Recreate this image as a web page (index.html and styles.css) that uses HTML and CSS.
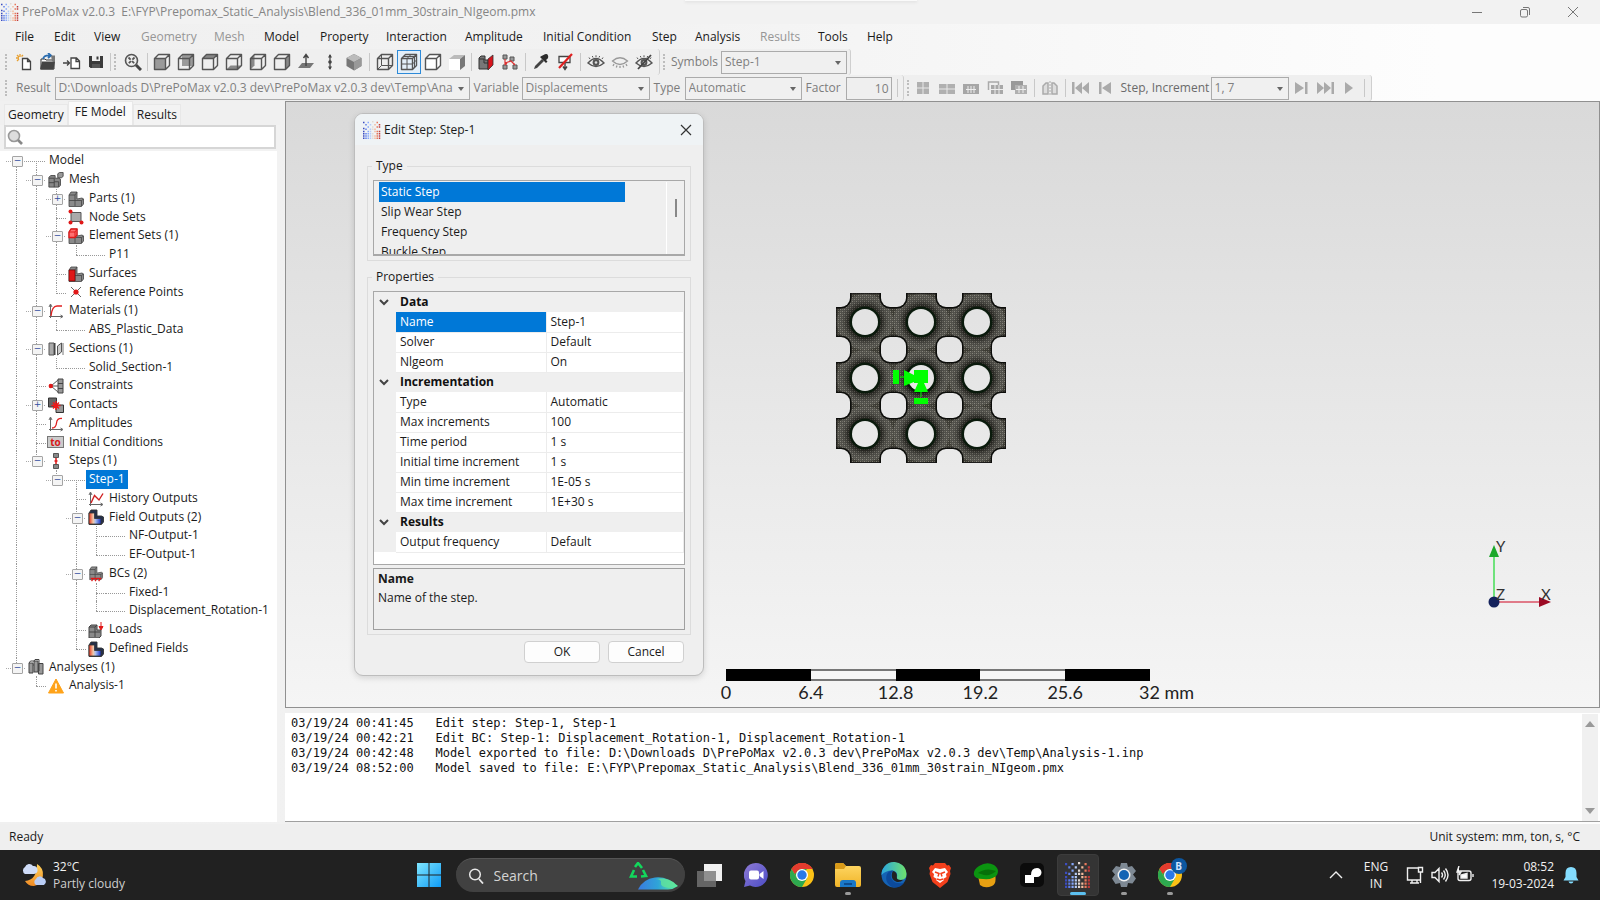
FILE: index.html
```html
<!DOCTYPE html>
<html lang="en">
<head>
<meta charset="utf-8">
<title>PrePoMax v2.0.3</title>
<link rel="stylesheet" href="styles.css">
</head>
<body>
<svg class="sprite" aria-hidden="true">
  <defs>
    <linearGradient id="gFolder" x1="0" y1="0" x2="0" y2="1"><stop offset="0" stop-color="#ffd968"/><stop offset="1" stop-color="#f0b428"/></linearGradient>
    <linearGradient id="gWin" x1="0" y1="0" x2="1" y2="1"><stop offset="0" stop-color="#7fe6ff"/><stop offset="1" stop-color="#0f9bf5"/></linearGradient>
    <linearGradient id="gChat" x1="0" y1="0" x2="1" y2="1"><stop offset="0" stop-color="#8f7bd6"/><stop offset="1" stop-color="#4b4cc4"/></linearGradient>
    <linearGradient id="gEdge" x1="0" y1="0" x2="1" y2="0"><stop offset="0" stop-color="#2aa6e0"/><stop offset="1" stop-color="#6fe26c"/></linearGradient>
    <linearGradient id="gField" x1="0" y1="0" x2="1" y2="0"><stop offset="0" stop-color="#e8341c"/><stop offset=".35" stop-color="#f4c9a8"/><stop offset=".55" stop-color="#a8bdf0"/><stop offset="1" stop-color="#1430c8"/></linearGradient>
    <linearGradient id="gMoon" x1="0" y1="0" x2="0" y2="1"><stop offset="0" stop-color="#ffd35c"/><stop offset="1" stop-color="#f08a24"/></linearGradient>
    <linearGradient id="gEarth" x1="0" y1="0" x2="1" y2="0"><stop offset="0" stop-color="#3a7be0"/><stop offset=".5" stop-color="#2fa4d8"/><stop offset="1" stop-color="#5df59a"/></linearGradient>
    <pattern id="pMesh" width="4" height="4" patternUnits="userSpaceOnUse"><rect width="4" height="4" fill="#3c3b34"/><path d="M0 0h1v1h-1zM2 2h1v1h-1z" fill="#7c7a6f"/><path d="M2 0h1v1h-1zM0 2h1v1h-1z" fill="#5f5d53"/></pattern>
    <radialGradient id="gSheen"><stop offset="0" stop-color="#000" stop-opacity=".45"/><stop offset=".6" stop-color="#000" stop-opacity=".35"/><stop offset="1" stop-color="#fff" stop-opacity=".1"/></radialGradient>
  </defs>
  <symbol id="logo" viewBox="0 0 24 24">
    <path fill="#3b4cc0" d="M0 1h2v2H0zM0 9h2v2H0zM0 13h2v2H0zM0 16h2v2H0zM0 19h2v2H0zM0 22h2v2H0z"/>
    <path fill="#5f7fe8" d="M3 4h2v2H3zM3 10h2v2H3zM3 16h2v2H3zM3 19h2v2H3zM3 22h2v2H3z"/>
    <path fill="#86a8fc" d="M6 1h2v2H6zM6 7h2v2H6zM6 13h2v2H6zM6 16h2v2H6zM6 19h2v2H6zM6 22h2v2H6z"/>
    <path fill="#b4cbf6" d="M9 4h2v2H9zM9 10h2v2H9zM9 13h2v2H9zM9 16h2v2H9zM9 19h2v2H9zM9 22h2v2H9z"/>
    <path fill="#e3d9d3" d="M12 0h2v2h-2zM12 7h2v2h-2zM12 10h2v2h-2zM12 16h2v2h-2zM12 19h2v2h-2zM12 22h2v2h-2z"/>
    <path fill="#f5b99a" d="M15 4h2v2h-2zM15 10h2v2h-2zM15 13h2v2h-2zM15 19h2v2h-2zM15 22h2v2h-2z"/>
    <path fill="#e8795a" d="M18 1h2v2h-2zM18 7h2v2h-2zM18 13h2v2h-2zM18 16h2v2h-2zM18 19h2v2h-2zM18 22h2v2h-2z"/>
    <path fill="#c03a3a" d="M21 4h2v2h-2zM21 7h2v2h-2zM21 13h2v2h-2zM21 16h2v2h-2zM21 19h2v2h-2zM21 22h2v2h-2z"/>
  </symbol>
  <symbol id="cube" viewBox="0 0 18 18"><path d="M1.500 5.500h11v11h-11zM1.500 5.500l4-4h11v11l-4 4M12.500 5.500l4-4" fill="none" stroke="#555" stroke-width="1.400" stroke-linejoin="round"/></symbol>
  <symbol id="blocks" viewBox="0 0 16 16"><path d="M1 4l2-3h6v7l5-1 1.500 1v5l-2 2.500H1z" fill="#8a8a8a" stroke="#444" stroke-width=".8"/><path d="M1 4h6v5.500h6.500V15M7 9.500V15M1 9.500h6M7 4l2-3M13.500 9.500l2-1.500" fill="none" stroke="#444" stroke-width=".8"/></symbol>
  <symbol id="field" viewBox="0 0 16 16"><path d="M1 4l2-3h6v6h4.500l2 1v5l-2 2.500H1z" fill="#24304a" stroke="#333" stroke-width=".9"/><path d="M1 4h5.500v5.500H13V15H1z" fill="url(#gField)" stroke="#333" stroke-width=".8"/></symbol>
  <symbol id="axes" viewBox="0 0 16 16"><path d="M2.500 15V2M1 13.500h13M1 4l1.500-3L4 4M12.500 12l2.500 1.500-2.500 1.500" fill="none" stroke="#666" stroke-width="1"/></symbol>
  <symbol id="chrome" viewBox="0 0 24 24"><circle cx="12" cy="12" r="12" fill="#fbc116"/><path d="M1.600 6A12 12 0 0 1 22.400 6H12z" fill="#e33b2e"/><path d="M1.600 6A12 12 0 0 0 12 24l5.200-9L12 12 6.800 15z" fill="#2da94f"/><path d="M1.600 6L6.800 15 12 12l5-6z" fill="#2da94f"/><path d="M1.600 6A12 12 0 0 1 22.400 6H12a6 6 0 0 0-5.200 3l-2 2z" fill="#e33b2e"/><circle cx="12" cy="12" r="6" fill="#fff"/><circle cx="12" cy="12" r="4.700" fill="#2a79e8"/></symbol>
  <symbol id="eye" viewBox="0 0 18 18"><path d="M1 10Q9 1 17 10Q9 17 1 10z" fill="#eee" stroke="#555" stroke-width="1.400"/><circle cx="9" cy="9.500" r="3.400" fill="#555"/><circle cx="9" cy="9.500" r="1.300" fill="#ddd"/><path d="M3 6L2 4.500M6 4.500L5.300 3M9 4V2.300M12 4.500L12.700 3M15 6l1-1.500" stroke="#555" stroke-width="1"/></symbol>
  <symbol id="gridIcon" viewBox="0 0 16 16"><path d="M2 2h12v12H2z" fill="#b0b0b0"/><path d="M8 2v12M2 8h12" stroke="#e8e8e8"/></symbol>
</svg>

<header class="titlebar">
  <svg class="i18"><use href="#logo"/></svg>
  <h1>PrePoMax v2.0.3&nbsp; E:\FYP\Prepomax_Static_Analysis\Blend_336_01mm_30strain_NIgeom.pmx</h1>
  <div class="winbtns">
    <button aria-label="Minimize"><svg class="i12" viewBox="0 0 12 12"><path d="M1 6.500h10"/></svg></button>
    <button aria-label="Restore"><svg class="i12" viewBox="0 0 12 12"><rect x="1.500" y="3.500" width="7" height="7.500" rx="1.500"/><path d="M4 1.500h5a1.500 1.500 0 0 1 1.500 1.500v6"/></svg></button>
    <button aria-label="Close"><svg class="i12" viewBox="0 0 12 12"><path d="M1 1l10 10M11 1L1 11"/></svg></button>
  </div>
</header>

<nav class="menubar" aria-label="Main menu">
  <button>File</button><button>Edit</button><button>View</button><button disabled>Geometry</button><button disabled>Mesh</button><button>Model</button><button>Property</button><button>Interaction</button><button>Amplitude</button><button>Initial Condition</button><button>Step</button><button>Analysis</button><button disabled>Results</button><button>Tools</button><button>Help</button>
</nav>

<div class="toolrow">
  <div class="strip">
    <i class="grip"></i>
    <button class="tb" aria-label="New"><svg class="i18" viewBox="0 0 18 18"><path d="M7.500 5.500h5l3 3v8h-8zM12.500 5.500v3h3" fill="#fff" stroke="#444" stroke-width="1.300"/><path d="M5 1v3M1 5h3M2 2l2 2M8 2L6.500 3.500M2 8l2-2" stroke="#e8a030" stroke-width="1.300"/></svg></button>
    <button class="tb" aria-label="Open"><svg class="i18" viewBox="0 0 18 18"><path d="M2 6h4l1 1h8v9H2z" fill="#fff" stroke="#333"/><path d="M1 16.500l2-8h13l-1.500 8z" fill="#444"/><path d="M4 6q1-4 7-3.500M9 0l3 2.500L9 5" fill="none" stroke="#2a6cb0" stroke-width="1.800"/><path d="M12 2.500h4v6h-3z" fill="#777"/></svg></button>
    <button class="tb" aria-label="Import"><svg class="i18" viewBox="0 0 18 18"><path d="M8 5h5.500l3 3v7.500H8zM13 5v3.500h3.500" fill="#fff" stroke="#444" stroke-width="1.300"/><path d="M0 10h6M4 7.500L6.500 10 4 12.500" fill="none" stroke="#444" stroke-width="1.300"/></svg></button>
    <button class="tb" aria-label="Save"><svg class="i18" viewBox="0 0 18 18"><path d="M2 3h14v12H3.500L2 13.500z" fill="#3a3a3a"/><path d="M5 3h8v5H5z" fill="#eee"/><path d="M9.500 3.500h2v3h-2z" fill="#3a3a3a"/><path d="M5 11h8v4H5z" fill="#555"/></svg></button>
    <i class="sep"></i><i class="grip"></i>
    <button class="tb" aria-label="Zoom to fit"><svg class="i18" viewBox="0 0 18 18"><circle cx="7.500" cy="7.500" r="6" fill="#eee" stroke="#555" stroke-width="1.600"/><path d="M4.500 4.500l6 6M10.500 4.500l-6 6" stroke="#555" stroke-width="1.800" stroke-dasharray="3 2"/><path d="M12 12l5 5" stroke="#444" stroke-width="3"/></svg></button>
    <i class="sep"></i>
    <button class="tb" aria-label="Front view"><svg class="i18" viewBox="0 0 18 18"><path d="M1 5h12v12H1z" fill="#9a9a9a"/><use href="#cube"/></svg></button>
    <button class="tb" aria-label="Back view"><svg class="i18" viewBox="0 0 18 18"><path d="M5 1h12v12H5z" fill="#9a9a9a"/><use href="#cube"/></svg></button>
    <button class="tb" aria-label="Top view"><svg class="i18" viewBox="0 0 18 18"><path d="M1.500 5.500l4-4h11l-4 4z" fill="#888"/><use href="#cube"/></svg></button>
    <button class="tb" aria-label="Bottom view"><svg class="i18" viewBox="0 0 18 18"><path d="M1.500 16.500l4-4h11l-4 4z" fill="#888"/><use href="#cube"/></svg></button>
    <button class="tb" aria-label="Left view"><svg class="i18" viewBox="0 0 18 18"><path d="M1.500 5.500l4-4v11l-4 4z" fill="#888"/><use href="#cube"/></svg></button>
    <button class="tb" aria-label="Right view"><svg class="i18" viewBox="0 0 18 18"><path d="M12.500 5.500l4-4v11l-4 4z" fill="#888"/><use href="#cube"/></svg></button>
    <button class="tb" aria-label="Normal view"><svg class="i18" viewBox="0 0 18 18"><path d="M1 15l4-5h12l-4 5z" fill="#777"/><path d="M9 13V2M6.500 5L9 1.500 11.500 5" stroke="#444" stroke-width="1.400" fill="none"/></svg></button>
    <button class="tb" aria-label="Vertical view"><svg class="i18" viewBox="0 0 18 18"><path d="M9 2v14" stroke="#555" stroke-width="1.400"/><path d="M7 4.500L9 1l2 3.500zM7 13.500L9 17l2-3.500z" fill="#444"/><circle cx="9" cy="9" r="1.800" fill="#444"/></svg></button>
    <button class="tb" aria-label="Isometric view"><svg class="i18" viewBox="0 0 18 18"><path d="M9 1l7.500 4v8L9 17.500 1.500 13V5z" fill="#777"/><path d="M9 1l7.500 4L9 9 1.500 5z" fill="#bbb"/><path d="M9 9l7.500-4v8L9 17.500z" fill="#999"/></svg></button>
    <i class="sep wide"></i>
    <button class="tb" aria-label="Wireframe"><svg class="i18" viewBox="0 0 18 18"><path d="M5.500 2v10.500H16M5.500 12.500l-4 4" stroke="#555" fill="none"/><use href="#cube"/></svg></button>
    <button class="tb on" aria-label="Show element edges"><svg class="i18" viewBox="0 0 18 18"><path d="M7 5.500v11M1.500 11h11l4-4M3.500 3.500h11v11M7 5.500l4-4" stroke="#555" fill="none"/><use href="#cube"/></svg></button>
    <button class="tb" aria-label="Show model edges"><svg class="i18" viewBox="0 0 18 18"><path d="M1 5l5-4h11v11l-5 5H1z" fill="#fff"/><use href="#cube"/></svg></button>
    <button class="tb" aria-label="No edges"><svg class="i18" viewBox="0 0 18 18"><path d="M1 6h11v11H1z" fill="#fff"/><path d="M1 6l5-4h11l-5 4z" fill="#bbb"/><path d="M12 6l5-4v11l-5 4z" fill="#777"/></svg></button>
    <i class="sep"></i>
    <button class="tb" aria-label="Section view"><svg class="i18" viewBox="0 0 18 18"><path d="M2 5l2-2h4v4h3v9H2z" fill="#777" stroke="#333"/><path d="M2 6h5v4h4" fill="none" stroke="#333"/><path d="M11 6l5-4v10l-5 5z" fill="#d8141c" stroke="#333" stroke-width=".8"/></svg></button>
    <button class="tb" aria-label="Exploded view"><svg class="i18" viewBox="0 0 18 18"><path d="M2 2h4v4H2zM9 4h4v4H9zM2 12h4v4H2zM12 12h4v4h-4z" fill="#999" stroke="#555"/><path d="M4 6v6M4 10l6-2 4 4M6 10l-2 2M13 10v2" stroke="#d33" fill="none" stroke-width="1.200"/></svg></button>
    <i class="sep wide"></i>
    <button class="tb" aria-label="Query"><svg class="i18" viewBox="0 0 18 18"><path d="M2 16l1-3 7-7 2 2-7 7z" fill="#444"/><path d="M8 4l6 6 1.500-1.500L14 7q3-2 2-4.500t-4.500-.5L9.500 3z" fill="#2c2c2c"/></svg></button>
    <button class="tb" aria-label="Remove annotations"><svg class="i18" viewBox="0 0 18 18"><path d="M3 3.500h11v6H3z" fill="#fff" stroke="#444" stroke-width="1.300"/><path d="M9 10v6M7 13.500l2 3 2-3" stroke="#444" stroke-width="1.400" fill="none"/><path d="M16 1L3 15" stroke="#e02020" stroke-width="2.200"/></svg></button>
    <i class="sep wide"></i>
    <button class="tb" aria-label="Show all"><svg class="i18"><use href="#eye"/></svg></button>
    <button class="tb" aria-label="Hide"><svg class="i18" viewBox="0 0 18 18"><path d="M1.500 8Q9 1.500 16.500 8Q9 15 1.500 8zM3 11l-1 2M6 12.500L5.300 14.500M9 13v2M12 12.500l.7 2M15 11l1 2" fill="none" stroke="#999" stroke-width="1.300"/></svg></button>
    <button class="tb" aria-label="Invert visibility"><svg class="i18" viewBox="0 0 18 18"><use href="#eye"/><path d="M16 2L3 16" stroke="#444" stroke-width="1.800"/></svg></button>
  </div>
  <div class="strip symbols">
    <i class="grip"></i>
    <label class="dim" for="symbols">Symbols</label>
    <span class="combo w126"><select id="symbols"><option>Step-1</option></select></span>
  </div>
</div>

<div class="toolrow">
  <div class="strip">
    <i class="grip"></i>
    <label class="dim" for="result">Result</label>
    <span class="combo w415"><select id="result" disabled><option>D:\Downloads D\PrePoMax v2.0.3 dev\PrePoMax v2.0.3 dev\Temp\Ana</option></select></span>
    <label class="dim w52" for="variable">Variable</label>
    <span class="combo w128"><select id="variable" disabled><option>Displacements</option></select></span>
    <label class="dim w35" for="deform">Type</label>
    <span class="combo w117"><select id="deform" disabled><option>Automatic</option></select></span>
    <label class="dim w44" for="factor">Factor</label>
    <input class="factor" id="factor" value="10" disabled>
    <i class="sep"></i>
  </div>
  <div class="strip results">
    <i class="grip"></i>
    <button class="tb" disabled aria-label="Undeformed"><svg class="i16"><use href="#gridIcon"/></svg></button>
    <button class="tb" disabled aria-label="Deformed"><svg class="i16" viewBox="0 0 16 16"><path d="M0 4h16v10H0z" fill="#b0b0b0"/><path d="M8 4v10M0 9h16" stroke="#e8e8e8"/></svg></button>
    <button class="tb" disabled aria-label="Color contours"><svg class="i16" viewBox="0 0 16 16"><path d="M0 4h16v10H0z" fill="#a6a6a6"/><path d="M5 6v7M8 6v7M11 6v7M3 9.500h10" stroke="#eee"/></svg></button>
    <button class="tb" disabled aria-label="Deformed with edges"><svg class="i16" viewBox="0 0 16 16"><path d="M4 5h12v9H4z" fill="#a8a8a8"/><path d="M8 5v9M12 5v9M4 9.500h12" stroke="#eee"/><path d="M1.500 10V2h10v3" fill="none" stroke="#aaa" stroke-width="1.500"/></svg></button>
    <button class="tb" disabled aria-label="Contours with undeformed"><svg class="i16" viewBox="0 0 16 16"><path d="M0 1h12v9H0z" fill="#999"/><path d="M4 5h12v9H4z" fill="#b0b0b0"/><path d="M8 6v7M12 6v7M5 9.500h10" stroke="#eee"/></svg></button>
    <i class="sep wide"></i>
    <button class="tb" disabled aria-label="Transformation"><svg class="i16" viewBox="0 0 16 16"><path d="M6 3v11H1V6l3-3zM10 3v11h5V6l-3-3z" fill="#ddd" stroke="#aaa" stroke-width="1.500"/><path d="M8 1v14" stroke="#aaa" stroke-dasharray="2 1"/></svg></button>
    <i class="sep wide"></i>
    <button class="tb" disabled aria-label="First increment"><svg class="i18" viewBox="0 0 18 18"><path d="M0 3h2.500v12H0zM10 3v12L3 9zM17 3v12l-7-6z" fill="#aaa"/></svg></button>
    <button class="tb" disabled aria-label="Previous increment"><svg class="i16" viewBox="0 0 16 16"><path d="M2 2h2.500v12H2zM14 2v12L5 8z" fill="#aaa"/></svg></button>
    <label class="stepinc" for="inc">Step, Increment</label>
    <span class="combo w78"><select id="inc" disabled><option>1, 7</option></select></span>
    <button class="tb" disabled aria-label="Next increment"><svg class="i16" viewBox="0 0 16 16"><path d="M2 2v12l9-6zM12 2h2.500v12H12z" fill="#aaa"/></svg></button>
    <button class="tb" disabled aria-label="Last increment"><svg class="i18" viewBox="0 0 18 18"><path d="M1 3v12l7-6zM8 3v12l7-6zM15.500 3H18v12h-2.500z" fill="#aaa"/></svg></button>
    <button class="tb" disabled aria-label="Animate"><svg class="i16" viewBox="0 0 16 16"><path d="M4 2v12l8-6z" fill="#aaa"/></svg></button>
    <i class="sep wide"></i>
  </div>
</div>

<main class="work">
  <aside class="side">
    <div class="tabs" role="tablist">
      <button role="tab">Geometry</button><button role="tab" class="sel" aria-selected="true">FE Model</button><button role="tab">Results</button>
    </div>
    <div class="search">
      <svg class="i16" viewBox="0 0 16 16"><circle cx="7" cy="7" r="5.500" fill="#ddd" stroke="#999" stroke-width="1.600"/><path d="M11 11l4 4" stroke="#888" stroke-width="2.600"/></svg>
      <input type="search" aria-label="Search model tree">
    </div>
    <ul class="tree">
      <li><i class="x first"></i><i class="h down"></i><span>Model</span></li>
      <li><i class="v"></i><i class="x"></i><i class="ico"><svg class="i16" viewBox="0 0 18 18"><path d="M1 6l2-2h5v3h4l2 1v7l-2 2H1z" fill="#888" stroke="#444"/><path d="M1 7h6v4h5v6M7 11v6M1 12h6" stroke="#444" fill="none"/><path d="M11 2l2-1.500h4V5l-2 1.500h-4z" fill="#999" stroke="#444"/></svg></i><span>Mesh</span></li>
      <li><i class="v"></i><i class="v"></i><i class="x plus"></i><i class="ico"><svg class="i16"><use href="#blocks"/></svg></i><span>Parts (1)</span></li>
      <li><i class="v"></i><i class="v"></i><i class="t"></i><i class="ico"><svg class="i16" viewBox="0 0 16 16"><path d="M3 3.500h10v9H3z" fill="#aaa" stroke="#555"/><circle cx="2.500" cy="2.500" r="2" fill="#e01818"/><circle cx="2.500" cy="13.500" r="2" fill="#e01818"/><circle cx="13.500" cy="13.500" r="2" fill="#e01818"/></svg></i><span>Node Sets</span></li>
      <li><i class="v"></i><i class="v"></i><i class="x"></i><i class="ico"><svg class="i16" viewBox="0 0 16 16"><use href="#blocks"/><path d="M1 4l2-3h6v6L7 9.500H1z" fill="#ff7070" stroke="#e01818" stroke-width="1.300"/><path d="M1 4h6v5M7 4l2-3" fill="none" stroke="#e01818"/></svg></i><span>Element Sets (1)</span></li>
      <li><i class="v"></i><i class="v"></i><i class="v"></i><i class="l"></i><i class="h"></i><span>P11</span></li>
      <li><i class="v"></i><i class="v"></i><i class="t"></i><i class="ico"><svg class="i16" viewBox="0 0 16 16"><use href="#blocks"/><path d="M1 4h6v11H1z" fill="#e01818" stroke="#600" stroke-width=".6"/></svg></i><span>Surfaces</span></li>
      <li><i class="v"></i><i class="v"></i><i class="l"></i><i class="ico"><svg class="i16" viewBox="0 0 16 16"><path d="M3 3l10 10M13 3L3 13" stroke="#666"/><circle cx="8" cy="8" r="2.600" fill="#e01818"/></svg></i><span>Reference Points</span></li>
      <li><i class="v"></i><i class="x"></i><i class="ico"><svg class="i16" viewBox="0 0 16 16"><use href="#axes"/><path d="M3 13Q4 3 9 3h5" fill="none" stroke="#e02020" stroke-width="1.300"/></svg></i><span>Materials (1)</span></li>
      <li><i class="v"></i><i class="v"></i><i class="l"></i><i class="h"></i><span>ABS_Plastic_Data</span></li>
      <li><i class="v"></i><i class="x"></i><i class="ico"><svg class="i16" viewBox="0 0 16 16"><path d="M1 2h5v12H1z" fill="#aaa" stroke="#555"/><path d="M6 2h1.500v12H6z" fill="#444"/><path d="M9.500 5l4-3v9l-4 3z" fill="#ccc" stroke="#555"/><path d="M15 2v12" stroke="#777"/></svg></i><span>Sections (1)</span></li>
      <li><i class="v"></i><i class="v"></i><i class="l"></i><i class="h"></i><span>Solid_Section-1</span></li>
      <li><i class="v"></i><i class="t"></i><i class="ico"><svg class="i16" viewBox="0 0 16 16"><path d="M10 1h5v14h-5zM10 5.500h5M10 10.500h5" fill="#999" stroke="#444"/><path d="M3 8l7-6M3 8h7M3 8l7 6" stroke="#555"/><circle cx="2.800" cy="8" r="2.200" fill="#e01818"/></svg></i><span>Constraints</span></li>
      <li><i class="v"></i><i class="x plus"></i><i class="ico"><svg class="i16" viewBox="0 0 16 16"><path d="M.5 1h8v9h-8z" fill="#666" stroke="#333"/><path d="M8 8h7.500v7.500H8z" fill="#999" stroke="#333"/><path d="M8 4v9M3.500 8.500h9M5 5.500l6 6M11 5.500l-6 6" stroke="#f01818" stroke-width="1.400"/></svg></i><span>Contacts</span></li>
      <li><i class="v"></i><i class="t"></i><i class="ico"><svg class="i16" viewBox="0 0 16 16"><use href="#axes"/><path d="M4 12q4 0 4.500-5T14 2.500" fill="none" stroke="#e02020" stroke-width="1.300"/></svg></i><span>Amplitudes</span></li>
      <li><i class="v"></i><i class="t"></i><i class="ico t0">to</i><span>Initial Conditions</span></li>
      <li><i class="v"></i><i class="x last"></i><i class="ico"><svg class="i16" viewBox="0 0 16 16"><path d="M5.500.5h5v4h-5zM5.500 11.500h5v4h-5z" fill="#888" stroke="#555"/><path d="M8 5v6M6.500 8h3" stroke="#e01818" stroke-width="1.500"/></svg></i><span>Steps (1)</span></li>
      <li><i class="v"></i><i></i><i class="x last"></i><i class="h down"></i><span class="picked">Step-1</span></li>
      <li><i class="v"></i><i></i><i></i><i class="t"></i><i class="ico"><svg class="i16" viewBox="0 0 16 16"><use href="#axes"/><path d="M3 12L6.500 4.500 11 9l4-6.500" fill="none" stroke="#d02020" stroke-width="1.400"/></svg></i><span>History Outputs</span></li>
      <li><i class="v"></i><i></i><i></i><i class="x"></i><i class="ico"><svg class="i16"><use href="#field"/></svg></i><span>Field Outputs (2)</span></li>
      <li><i class="v"></i><i></i><i></i><i class="v"></i><i class="t"></i><i class="h"></i><span>NF-Output-1</span></li>
      <li><i class="v"></i><i></i><i></i><i class="v"></i><i class="l"></i><i class="h"></i><span>EF-Output-1</span></li>
      <li><i class="v"></i><i></i><i></i><i class="x"></i><i class="ico"><svg class="i16" viewBox="0 0 16 18"><use href="#blocks" width="16" height="16"/><path d="M3 17l2-3M7 17l2-3M11 17l2-3M2 14h12" stroke="#e01818" stroke-width="1.400"/></svg></i><span>BCs (2)</span></li>
      <li><i class="v"></i><i></i><i></i><i class="v"></i><i class="t"></i><i class="h"></i><span>Fixed-1</span></li>
      <li><i class="v"></i><i></i><i></i><i class="v"></i><i class="l"></i><i class="h"></i><span>Displacement_Rotation-1</span></li>
      <li><i class="v"></i><i></i><i></i><i class="t"></i><i class="ico"><svg class="i16" viewBox="0 0 16 16"><path d="M1 5l2-2h6v5h4v6l-2 2H1z" fill="#8a8a8a" stroke="#444"/><path d="M1 5h6v5h5M1 10h6v5M7 5l2-2" fill="none" stroke="#444"/><path d="M13 0v6M11 4.500L13 8l2-3.500z" fill="#e01818" stroke="#e01818"/></svg></i><span>Loads</span></li>
      <li><i class="v"></i><i></i><i></i><i class="l"></i><i class="ico"><svg class="i16"><use href="#field"/></svg></i><span>Defined Fields</span></li>
      <li><i class="x last"></i><i class="ico"><svg class="i16" viewBox="0 0 16 16"><path d="M1 4h4v10H1zM6 2h4v11H6zM10.500 4.500h4.500V15h-4.500z" fill="#999" stroke="#444"/><path d="M1 4l1.500-2H6M6 2l1-1.500h4V12M5 6h1" fill="none" stroke="#444"/></svg></i><span>Analyses (1)</span></li>
      <li><i></i><i class="l"></i><i class="ico"><svg class="i16" viewBox="0 0 16 16"><path d="M8 1l7.500 14H.5z" fill="#ffa31a" stroke="#ffa31a" stroke-linejoin="round"/><path d="M8 5.500v5M8 12v1.600" stroke="#fff" stroke-width="1.600"/></svg></i><span>Analysis-1</span></li>
    </ul>
  </aside>

  <section class="right">
    <div class="view">
      <svg class="model" viewBox="0 0 170 170" role="img" aria-label="Lattice mesh">
        <defs>
          <g id="lat">
            <rect x="-11" y="-11" width="25" height="25" rx="9"/><rect x="45" y="-11" width="25" height="25" rx="9"/><rect x="101" y="-11" width="25" height="25" rx="9"/><rect x="156" y="-11" width="25" height="25" rx="9"/>
            <rect x="-11" y="44" width="25" height="25" rx="9"/><rect x="45" y="44" width="25" height="25" rx="9"/><rect x="101" y="44" width="25" height="25" rx="9"/><rect x="156" y="44" width="25" height="25" rx="9"/>
            <rect x="-11" y="100" width="25" height="25" rx="9"/><rect x="45" y="100" width="25" height="25" rx="9"/><rect x="101" y="100" width="25" height="25" rx="9"/><rect x="156" y="100" width="25" height="25" rx="9"/>
            <rect x="-11" y="156" width="25" height="25" rx="9"/><rect x="45" y="156" width="25" height="25" rx="9"/><rect x="101" y="156" width="25" height="25" rx="9"/><rect x="156" y="156" width="25" height="25" rx="9"/>
          </g>
          <g id="bores"><circle cx="29" cy="29" r="13"/><circle cx="85" cy="29" r="13"/><circle cx="141" cy="29" r="13"/><circle cx="29" cy="85" r="13"/><circle cx="85" cy="85" r="13"/><circle cx="141" cy="85" r="13"/><circle cx="29" cy="141" r="13"/><circle cx="85" cy="141" r="13"/><circle cx="141" cy="141" r="13"/></g>
          <mask id="cut"><rect width="170" height="170" fill="#fff"/><use href="#lat" fill="#000"/><use href="#bores" fill="#000"/></mask>
          <pattern id="pSheen" x="1" y="1" width="56" height="56" patternUnits="userSpaceOnUse"><circle cx="28" cy="28" r="28" fill="url(#gSheen)"/></pattern>
        </defs>
        <g mask="url(#cut)"><rect width="170" height="170" fill="url(#pMesh)"/><rect width="170" height="170" fill="url(#pSheen)"/><use href="#lat" fill="none" stroke="#0c0d0a" stroke-width="3"/><use href="#bores" fill="none" stroke="#0a1a0c" stroke-width="5"/><path d="M0 0h170v170H0z" fill="none" stroke="#111" stroke-width="1.500"/></g>
        <path d="M57 77h6v14h-6zM68 77l10 5v-5h14v13h-4l4 9H78l4-9h-4v-1l-10 4zM78 105h14v6H78z" fill="#0f0"/><path d="M64 84h4M85 98v6" stroke="#0f0"/>
      </svg>
      <svg class="triad" viewBox="0 0 70 78" role="img" aria-label="Axes">
        <path d="M10 68V22" stroke="#6fe27c" stroke-width="2"/><path d="M10 11l5 12H5z" fill="#1ca82a"/>
        <path d="M14 68h42" stroke="#e07a88" stroke-width="2"/><path d="M67 68l-12-5v10z" fill="#9c0a24"/><circle cx="10" cy="68" r="5.500" fill="#14225c"/>
        <text x="12" y="18">Y</text><text x="12" y="66">Z</text><text x="57" y="66">X</text>
      </svg>
      <div class="scale">
        <div class="bar"><i></i><i></i><i></i><i></i><i></i></div>
        <div class="marks"><span>0</span><span>6.4</span><span>12.8</span><span>19.2</span><span>25.6</span><span class="end">32 mm</span></div>
      </div>

      <form class="dialog" role="dialog" aria-label="Edit Step: Step-1">
        <div class="dtitle"><svg class="i18"><use href="#logo"/></svg><h2>Edit Step: Step-1</h2><button type="button" aria-label="Close"><svg class="i12" viewBox="0 0 12 12"><path d="M1 1l10 10M11 1L1 11" stroke="#333" fill="none" stroke-width="1.200"/></svg></button></div>
        <fieldset class="gtype"><legend>Type</legend>
          <div class="listbox">
            <ul role="listbox" aria-label="Type"><li role="option" aria-selected="true" class="picked">Static Step</li><li role="option">Slip Wear Step</li><li role="option">Frequency Step</li><li role="option">Buckle Step</li></ul>
            <div class="thumb"></div>
          </div>
        </fieldset>
        <fieldset class="gprops"><legend>Properties</legend>
          <div class="pgrid">
            <table>
              <colgroup><col class="c1"><col class="c2"><col></colgroup>
              <tr class="cat"><td><svg class="i12" viewBox="0 0 12 12"><path d="M2 4l4 4 4-4"/></svg></td><th colspan="2">Data</th></tr>
              <tr><td></td><th class="picked">Name</th><td>Step-1</td></tr>
              <tr><td></td><th>Solver</th><td>Default</td></tr>
              <tr><td></td><th>Nlgeom</th><td>On</td></tr>
              <tr class="cat"><td><svg class="i12" viewBox="0 0 12 12"><path d="M2 4l4 4 4-4"/></svg></td><th colspan="2">Incrementation</th></tr>
              <tr><td></td><th>Type</th><td>Automatic</td></tr>
              <tr><td></td><th>Max increments</th><td>100</td></tr>
              <tr><td></td><th>Time period</th><td>1 s</td></tr>
              <tr><td></td><th>Initial time increment</th><td>1 s</td></tr>
              <tr><td></td><th>Min time increment</th><td>1E-05 s</td></tr>
              <tr><td></td><th>Max time increment</th><td>1E+30 s</td></tr>
              <tr class="cat"><td><svg class="i12" viewBox="0 0 12 12"><path d="M2 4l4 4 4-4"/></svg></td><th colspan="2">Results</th></tr>
              <tr><td></td><th>Output frequency</th><td>Default</td></tr>
            </table>
          </div>
          <div class="desc"><strong>Name</strong><p>Name of the step.</p></div>
        </fieldset>
        <div class="actions"><button type="button">OK</button><button type="button">Cancel</button></div>
      </form>
    </div>
    <div class="console">
      <pre>03/19/24 00:41:45   Edit step: Step-1, Step-1
03/19/24 00:42:21   Edit BC: Step-1: Displacement_Rotation-1, Displacement_Rotation-1
03/19/24 00:42:48   Model exported to file: D:\Downloads D\PrePoMax v2.0.3 dev\PrePoMax v2.0.3 dev\Temp\Analysis-1.inp
03/19/24 08:52:00   Model saved to file: E:\FYP\Prepomax_Static_Analysis\Blend_336_01mm_30strain_NIgeom.pmx</pre>
      <div class="vscroll"><i class="up"></i><i class="dn"></i></div>
    </div>
  </section>
</main>

<footer class="status"><span>Ready</span><span>Unit system: mm, ton, s, °C</span></footer>

<div class="taskbar">
  <div class="weather">
    <svg viewBox="0 0 26 26"><path d="M16 2a12 12 0 0 1-3 22 10 10 0 0 1-9-5q12-1 12-17z" fill="url(#gMoon)"/><path d="M4 12a4 4 0 0 1 0-7 4.500 4.500 0 0 1 8-1 4 4 0 0 1 1 8z" fill="#cfdcf8"/><path d="M15 23a3.500 3.500 0 0 1 0-6 4 4 0 0 1 7-1 3.800 3.800 0 0 1 1 7z" fill="#b9cdf6"/></svg>
    <p>32°C<br><span>Partly cloudy</span></p>
  </div>
  <div class="apps">
    <button class="app" aria-label="Start"><svg class="i24" viewBox="0 0 24 24"><path d="M0 0h11.500v11.500H0zM12.500 0H24v11.500H12.500zM0 12.500h11.500V24H0zM12.500 12.500H24V24H12.500z" fill="url(#gWin)"/></svg></button>
    <label class="tsearch"><svg class="i16" viewBox="0 0 16 16"><circle cx="7" cy="6.500" r="5.300" fill="none" stroke="#e8e8e8" stroke-width="1.500"/><path d="M11 11l4 4.500" stroke="#e8e8e8" stroke-width="1.800"/></svg><input placeholder="Search" aria-label="Search"><svg class="art" viewBox="0 0 50 28"><path d="M9 27.500Q14 17 26 15.500T49 24q-5 3.500-10 3.500z" fill="url(#gEarth)"/><path d="M26 17q7 0 6 4t8 5l5-1q2-4-1-5-7-5-18-3z" fill="#62e39a" opacity=".8"/><path d="M6 5l3-4 4 5M14 8l3 6-5 .5M8 14.500H2L5 8" fill="none" stroke="#12d85c" stroke-width="2.600"/></svg></label>
    <button class="app" aria-label="Task view"><svg class="i26" viewBox="0 0 26 26"><path d="M7 2h18v17H7z" fill="#f0f0f0"/><path d="M0 9h19v16H0z" fill="#777" opacity=".8"/></svg></button>
    <button class="app" aria-label="Chat"><svg class="i24" viewBox="0 0 24 24"><path d="M12 0a12 12 0 1 1-6 22.500L0 24l1.500-6A12 12 0 0 1 12 0z" fill="url(#gChat)"/><rect x="5" y="7.500" width="10" height="9" rx="2" fill="#fff"/><path d="M15.500 11l4-3v8l-4-3z" fill="#fff"/></svg></button>
    <button class="app" aria-label="Chrome"><svg class="i24"><use href="#chrome"/></svg></button>
    <button class="app run" aria-label="File Explorer"><svg class="i26" viewBox="0 0 26 26"><path d="M0 3q0-2 2-2h6l3 3h13q2 0 2 2v17q0 2-2 2H2q-2 0-2-2z" fill="url(#gFolder)"/><path d="M0 3q0-2 2-2h6l3 3-2 3H0z" fill="#d99a18"/><path d="M5 25v-4q0-3 3-3h10q3 0 3 3v4z" fill="#1a78c8"/><path d="M9 22h8" stroke="#0d4d90" stroke-width="2"/></svg></button>
    <button class="app" aria-label="Edge"><svg class="i26" viewBox="0 0 26 26"><circle cx="13" cy="13" r="12.500" fill="#1563b4"/><path d="M.5 13A12.500 12.500 0 0 1 25.500 12q0 6-6.500 6-4 0-3-3 1-5-4-6.500Q5 8 .5 13z" fill="url(#gEdge)"/><path d="M12 8.500q-4 4-1 9t12 3.500Q18 27 11 25 3 20 6 12q2-3.500 6-3.500z" fill="#0c4a9c"/><path d="M12 9q4.500 1 3.800 6-.4 3 4 3l2.500-.3q-3 3-7 2-5-2-4.500-7 .3-2.500 1.200-3.700z" fill="#212121"/></svg></button>
    <button class="app" aria-label="Brave"><svg class="i26" viewBox="0 0 26 26"><path d="M8 1h10l2 2.500 2-.5 2 3-1 3 .5 3-3 8-7.500 6-7.500-6-3-8L3 9 2 6l2-3 2 .500z" fill="#f4401c"/><path d="M8 6l5 1 5-1 3 4-2 2 .5 3-3.500 2 1 1-4 3-4-3 1-1-3.500-2 .5-3-2-2z" fill="#fff"/><path d="M8 10l4 1.500-1 3M18 10l-4 1.500 1 3M10 17l3 1 3-1" fill="none" stroke="#f4401c" stroke-width="1.500"/></svg></button>
    <button class="app" aria-label="Grasshopper"><svg class="i26" viewBox="0 0 26 26"><path d="M5 14l17-2q2 10-3 12-7 3-12-1z" fill="#e8a012"/><path d="M1 13Q0 8 6 4 14-1 21 3q6 4 3 10-4 5-14 4-8 0-9-4z" fill="#0b9410"/><path d="M5 11q8-6 18-2-5 5-12 4z" fill="#067008"/></svg></button>
    <button class="app" aria-label="Lens"><svg class="i24" viewBox="0 0 24 24"><rect width="24" height="24" rx="5" fill="#0b0b0b"/><path d="M5 12h6q0-7 6-7a4.500 4.500 0 0 1 0 9h-3v6H5z" fill="#fff"/></svg></button>
    <button class="app cur" aria-label="PrePoMax"><svg class="i26"><use href="#logo"/></svg></button>
    <button class="app run" aria-label="Settings"><svg class="i26" viewBox="0 0 26 26"><path d="M10 1h6l1 4 4-1 4 5-3 3.500 3 4-3.500 5L17 21l-1 4h-6l-1-4-4.500 1L1 16.500l3-4L1 9l4-5 4 1z" fill="#7e8994"/><circle cx="13" cy="13" r="6.500" fill="#f2f2f2"/><circle cx="13" cy="13" r="5" fill="#1464b4"/></svg></button>
    <button class="app run" aria-label="Chrome, profile B"><svg class="i24"><use href="#chrome"/></svg><b>B</b></button>
  </div>
  <div class="tray">
    <svg class="i16" viewBox="0 0 16 16"><path d="M2 11l6-6 6 6"/></svg>
    <p class="lang">ENG<br>IN</p>
    <svg class="i18" viewBox="0 0 18 18"><path d="M12 2H1.500v12H14M4 17h9M6 14v3M11 14v3M12.500 1.500h4V6h-4zM14.500 6v11"/></svg>
    <svg class="i18" viewBox="0 0 18 18"><path d="M1 6.500h3l4-4v13l-4-4H1zM10.500 6.500q2 2.500 0 5M12.500 4.500q3.500 4.500 0 9M14.500 2.500q5 6.500 0 13"/></svg>
    <svg class="i18" viewBox="0 0 18 18"><rect x="2" y="5" width="13" height="9.500" rx="2"/><path d="M17 8v3"/><path d="M5 12h6V7.500L5 9zM3 0L1 6h4L3 9" fill="#fff"/></svg>
    <p class="clock">08:52<br>19-03-2024</p>
    <svg class="i18 bell" viewBox="0 0 18 18"><path d="M9 1q5.500 0 5.500 6v4l2 3.500h-15l2-3.500V7Q3.500 1 9 1zM6.500 15.500h5q-.5 2-2.500 2t-2.500-2z" fill="#84ddff" stroke="none"/></svg>
  </div>
</div>
</body>
</html>
```
FILE: styles.css
```css
* { box-sizing: border-box; }
body {
  margin: 0;
  height: 100vh;
  display: flex;
  flex-direction: column;
  background: linear-gradient(90deg, #f0f0f0 0, #f2f2f2 40%, #fdfdfd 90%);
  color: #1a1a1a;
  font: 12px/16px "Open Sans", "Noto Sans", sans-serif;
  overflow: hidden;
}
button, input, select { font: inherit; color: inherit; border: 0; background: none; padding: 0; margin: 0; }
h1, h2, p, pre, ul, legend { margin: 0; padding: 0; font-weight: 400; font-size: inherit; }
ul { list-style: none; }
i { font-style: normal; }
svg { display: block; flex: none; }
.sprite { position: absolute; width: 0; height: 0; }
.i12 { width: 12px; height: 12px; }
.i16 { width: 16px; height: 16px; }
.i18 { width: 18px; height: 18px; }
.i24 { width: 24px; height: 24px; }
.i26 { width: 26px; height: 26px; }
.picked { background: #0078d7; color: #fff; }

.titlebar { position: relative; flex: none; height: 24px; display: flex; align-items: center; gap: 3px; padding-left: 1px; background: #f2f2f2; color: #858585; }
.titlebar::after { content: ""; position: absolute; left: 685px; top: 0; width: 232px; height: 1px; background: #fafafa; box-shadow: 0 1px 3px #ccc; }
.winbtns { margin-left: auto; display: flex; padding-right: 3px; }
.winbtns button { width: 48px; height: 24px; display: grid; place-items: center; }
.winbtns path, .winbtns rect { fill: none; stroke: #777; }

.menubar { flex: none; height: 25px; display: grid; grid-template-columns: 39px 40px 47px 73px 50px 56px 66px 79px 78px 109px 43px 65px 58px 49px 40px; padding-left: 15px; align-items: center; }
.menubar button { text-align: left; white-space: nowrap; }
.menubar button:disabled { color: #969696; }

.toolrow { flex: none; height: 26px; display: flex; }
.strip { display: flex; align-items: center; height: 26px; padding: 0 3px 0 4px; border-right: 1px solid #cfcfcf; border-radius: 0 3px 3px 0; background: #efefef; }
.grip { width: 4px; height: 16px; margin: 0 3px 0 1px; border-left: 2px dotted #bdbdbd; flex: none; }
.sep { width: 1px; height: 18px; margin: 0 2px; background: #c8c8c8; flex: none; }
.sep.wide { margin: 0 3px; }
.tb { width: 24px; height: 24px; display: grid; place-items: center; flex: none; }
.tb.on { border: 1px solid #2d8ad8; background: #e3eff9; }
.symbols { padding-left: 2px; }
.symbols .grip { margin-right: 1px; }
.results { padding-left: 2px; }
.results .grip { margin-right: 0; }
.dim { color: #7c7c7c; padding: 0 4px; }
.symbols .dim { padding: 0 3px; }
.w52 { width: 52px; }
.w35 { width: 35px; }
.w44 { width: 44px; }
.stepinc { width: 94px; padding-left: 4px; color: #6a6a6a; white-space: nowrap; }
.combo { position: relative; display: flex; height: 23px; border: 1px solid #ababab; background: #f0f0f0; color: #808080; }
.combo::after { content: ""; position: absolute; right: 5px; top: 9px; border: 3px solid transparent; border-top: 4px solid #666; border-bottom: 0; }
.combo select { width: 100%; padding: 0 3px; appearance: none; outline: 0; opacity: 1; }
.w126 { width: 126px; }
.w415 { width: 415px; }
.w128 { width: 128px; }
.w117 { width: 117px; }
.w78 { width: 78px; }
.factor { width: 46px; height: 23px; border: 1px solid #ababab; text-align: right; padding-right: 2px; color: #808080; margin-right: 3px; }

.work { flex: 1; min-height: 0; display: flex; }
.side { flex: none; width: 280px; background: #f2f2f2; display: flex; flex-direction: column; }
.tabs { display: flex; align-items: flex-end; height: 24px; padding-left: 4px; background: #f0f0f0; }
.tabs button { height: 21px; padding: 0 3px; border: 1px solid #e8e8e8; border-bottom: 0; white-space: nowrap; background: #f3f3f3; }
.tabs .sel { height: 24px; padding: 0 6px 3px; background: #fafafa; }
.search { display: flex; align-items: center; height: 24px; margin: 0 4px 2px; padding-left: 1px; border: 2px solid #d6d6d6; background: #fff; }
.search input { flex: 1; min-width: 0; outline: 0; }
.tree { flex: 1; width: 277px; background: #fff; padding-left: 6px; display: grid; grid-template-rows: repeat(7, 19px 19px 19px 18px) 19px; align-content: start; }
.tree li { display: flex; white-space: nowrap; }
.tree i { position: relative; width: 20px; flex: none; }
.tree span { padding: 0 3px; line-height: 18px; }
.v::before, .t::before, .l::before, .x::before, .down::before { content: ""; position: absolute; left: 10px; top: 0; bottom: 0; border-left: 1px dotted #999; }
.l::before, .last::before { bottom: 50%; }
.first::before, .down::before { top: 50%; }
.t::after, .l::after, .h::after { content: ""; position: absolute; left: 10px; right: 0; top: 10px; border-top: 1px dotted #999; }
.h::after { left: 0; right: 1px; }
.x { background: linear-gradient(90deg, #aaa 1px, transparent 1px) 14px 10px / 2px 1px repeat-x; background-clip: content-box; }
.x::after { content: "−"; position: absolute; left: 6px; top: 5px; width: 9px; height: 9px; border: 1px solid #a4a4a4; border-radius: 1px; background: #f4f4f4; color: #3050a0; font: 9px/7px "DejaVu Sans", sans-serif; text-align: center; }
.plus::after { content: "+"; }
.ico { display: grid; place-items: center; z-index: 1; }
.t0 { height: 12px; margin: 3px 2px 0 1px; border: 1px solid #777; background: #ccc; color: #d81818; font: bold 10px/9px "Open Sans", sans-serif; }
.tree .t0 { width: 17px; }

.right { flex: 1; min-width: 0; display: flex; flex-direction: column; margin-left: 5px; background: #f0f0f0; }
.view { position: relative; flex: 1; border: 1px solid #909090; background: linear-gradient(#d9d9d9, #f5f5f5); }
.model { position: absolute; left: 550px; top: 191px; width: 170px; height: 170px; }
.triad { position: absolute; right: 45px; top: 432px; width: 70px; height: 78px; }
.triad text { font: 15px/18px Lato, sans-serif; fill: #333; }
.scale { position: absolute; left: 440px; bottom: 3px; width: 424px; }
.bar { display: flex; height: 12px; border: 2px solid #777; border-width: 2px 0; background: #f6f6f6; }
.bar i { flex: 1; }
.bar i:nth-child(odd) { background: #000; margin: -2px 0; }
.marks { display: flex; font: 18px/23px Lato, sans-serif; color: #222; justify-content: space-between; }
.marks span { width: 0; display: flex; justify-content: center; white-space: nowrap; }
.marks .end { justify-content: flex-start; margin-right: 11px; margin-left: -11px; }

.dialog { position: absolute; left: 68px; top: 11px; width: 350px; border: 1px solid #bdbdbd; border-radius: 9px; background: #efefef; box-shadow: 0 2px 6px #0002; overflow: hidden; }
.dtitle { height: 31px; display: flex; align-items: center; gap: 3px; padding: 0 11px 0 8px; background: #eff3f5; }
.dtitle button { margin-left: auto; }
.dialog fieldset { margin: 0 12px; padding: 0 5px 5px; border: 1px solid #dcdcdc; min-width: 0; }
.dialog legend { padding: 0 4px; margin-left: -1px; line-height: 16px; }
.dialog .gtype { margin-top: 13px; padding-bottom: 4px; }
.dialog .gprops { margin-top: 8px; padding-bottom: 4px; }
.listbox { display: flex; height: 76px; margin-top: 6px; border: 2px solid #a8a8a8; border-width: 1px 1px 2px; overflow: hidden; padding: 1px 0 0 5px; }
.listbox ul { width: 246px; }
.listbox li { height: 20px; line-height: 19px; padding-left: 2px; }
.thumb { margin-left: auto; width: 18px; border-left: 1px solid #fff; position: relative; }
.thumb::after { content: ""; position: absolute; left: 8px; top: 17px; width: 2px; height: 18px; background: #888; }
.pgrid { height: 274px; margin-top: 6px; border: 1px solid #a8a8a8; background: #fff; }
.pgrid table { width: 100%; border-collapse: collapse; table-layout: fixed; }
.c1 { width: 22px; }
.c2 { width: 150px; }
.pgrid td, .pgrid th { height: 20px; padding: 0 4px; line-height: 18px; text-align: left; font-weight: 400; border-bottom: 1px solid #ececec; border-right: 1px solid #ececec; white-space: nowrap; }
.pgrid td:first-child { background: #efefef; border: 0; padding: 0 0 0 4px; }
.pgrid .cat th { font-weight: 700; background: #efefef; border: 0; color: #111; }
.pgrid .picked { background: #0078d7; }
.cat path { fill: none; stroke: #444; stroke-width: 2; }
.desc { height: 62px; margin-top: 3px; padding: 1px 4px; border: 1px solid #a0a0a0; line-height: 19px; }
.desc strong { display: block; line-height: 18px; }
.actions { display: flex; justify-content: flex-end; gap: 8px; padding: 6px 19px 12px; }
.actions button { width: 76px; height: 22px; border: 1px solid #d0d0d0; border-radius: 4px; background: #fdfdfd; }

.console { flex: none; height: 109px; margin-top: 5px; border-bottom: 1px solid #a0a0a0; background: #fff; display: flex; padding: 3px 2px 0 6px; }
.console pre { flex: 1; min-width: 0; font: 12px/15px "DejaVu Sans Mono", monospace; color: #111; overflow: hidden; }
.vscroll { width: 16px; margin-top: -2px; background: #f0f0f0; display: flex; flex-direction: column; justify-content: space-between; align-items: center; padding: 7px 0; }
.up, .dn { border: 5px solid transparent; }
.up { border-top: 0; border-bottom: 6px solid #999; }
.dn { border-bottom: 0; border-top: 6px solid #999; }

.status { flex: none; height: 26px; margin-top: 2px; display: flex; justify-content: space-between; align-items: center; padding: 0 20px 0 9px; background: #efefef; }

.taskbar { flex: none; height: 50px; display: grid; grid-template-columns: 1fr auto 1fr; align-items: center; background: #212121; color: #f2f2f2; }
.weather { display: flex; align-items: center; gap: 6px; padding-left: 21px; line-height: 17px; }
.weather svg { width: 26px; height: 26px; }
.weather span { color: #cfcfcf; }
.apps { display: flex; align-items: center; }
.app { position: relative; width: 46px; height: 50px; display: grid; place-items: center; }
.app:first-child { width: 42px; margin-right: 6px; }
.run::after, .cur::after { content: ""; position: absolute; left: 20px; bottom: 5px; width: 6px; height: 3px; border-radius: 2px; background: #9a9a9a; }
.cur::after { left: 15px; width: 16px; background: #5cc0f0; }
.cur::before { content: ""; position: absolute; inset: 4px 2px; border-radius: 4px; background: #343434; border: 1px solid #3c3c3c; }
.cur svg { position: relative; }
.app b { position: absolute; left: 24px; top: 8px; width: 16px; height: 16px; border-radius: 8px; background: #0d57a0; color: #cfe4ff; font-size: 10px; line-height: 16px; text-align: center; }
.tsearch { display: flex; align-items: center; width: 229px; height: 34px; margin-right: 2px; padding: 0 6px 0 12px; border-radius: 17px; background: #414141; border-top: 1px solid #555; }
.tsearch input { flex: 1; min-width: 0; margin-left: 10px; font-size: 14px; outline: 0; }
.tsearch input::placeholder { color: #d4d4d4; }
.art { width: 50px; height: 28px; align-self: flex-end; margin-bottom: 2px; }
.tray { display: flex; align-items: center; justify-content: flex-end; padding-right: 20px; line-height: 17px; }
.tray svg { fill: none; stroke: #f0f0f0; stroke-width: 1.4; margin-left: 7px; }
.lang { text-align: center; width: 26px; margin: 0 14px 0 19px; }
.clock { text-align: right; width: 80px; }
.tray .lang + svg { margin-left: 3px; }
.tray .bell { margin-left: 8px; }
```
